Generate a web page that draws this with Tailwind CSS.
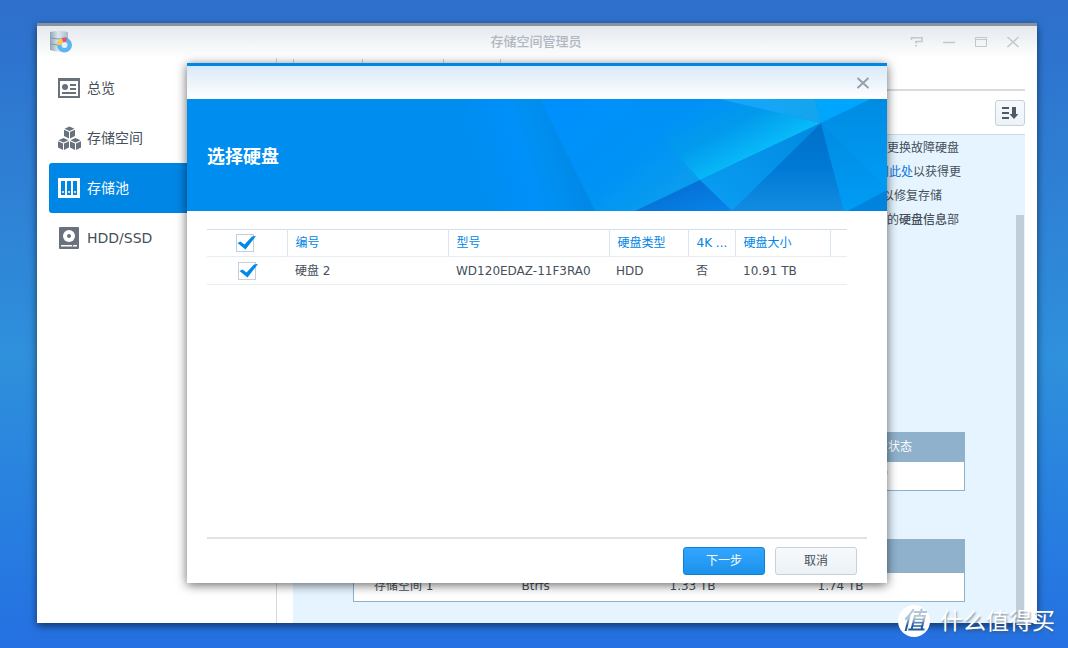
<!DOCTYPE html>
<html lang="zh-CN">
<head>
<meta charset="utf-8">
<title>存储空间管理员</title>
<script src="https://cdn.jsdelivr.net/npm/@tailwindcss/browser@4"></script>
</head>
<body class="font-['DejaVu_Sans','Noto_Sans_CJK_SC',sans-serif] text-xs text-[#464f5a]">
<div class="relative flex min-h-screen overflow-hidden bg-linear-to-b from-[#2e6fcc] via-[#2f90dc] via-55% to-[#2570e2] pt-[23px] pr-[31px] pb-[25px] pl-[37px]">

  <!-- Storage manager window -->
  <main class="relative flex w-full flex-col border-t-3 border-[#8a929e] bg-white shadow-[0_3px_8px_rgba(0,0,0,0.55)]">
    <header class="flex h-8 items-center bg-linear-to-b from-[#e4e9ee] to-white pr-4 pl-3">
      <svg class="size-6" viewBox="0 0 24 24" aria-hidden="true">
        <defs><linearGradient id="cyl" x1="0" x2="1"><stop offset="0" stop-color="#8fa5b4"/><stop offset=".45" stop-color="#dbe7ef"/><stop offset="1" stop-color="#a7bdcc"/></linearGradient></defs>
        <path d="M1 2Q10 0 19 2V20Q10 23 1 20Z" fill="url(#cyl)"/>
        <path d="M1 8Q10 10 19 8M1 14Q10 16 19 14" stroke="#8699a6" fill="none"/>
        <circle cx="15.500" cy="15" r="5.250" fill="#e6edf3" stroke="#5ab6f0" stroke-width="4.500"/>
        <path d="M10.250 15A5.250 5.250 0 0 1 13.500 10.150" fill="none" stroke="#f9c852" stroke-width="4.500"/>
        <path d="M13.500 10.150A5.250 5.250 0 0 1 17.500 10.150" fill="none" stroke="#e8536d" stroke-width="4.500"/>
      </svg>
      <h1 class="flex-1 pl-[90px] text-center text-[13px] font-medium text-[#b0b7c1]">存储空间管理员</h1>
      <div class="flex gap-4 text-[#c3c7cc]">
        <button type="button" aria-label="帮助" class="size-4"><svg viewBox="0 0 16 16" fill="none" stroke="currentColor" stroke-width="1.500"><path d="M2.500 6V3.750H13V7.500H7V9.500M6.250 11.750H8"/></svg></button>
        <button type="button" aria-label="最小化" class="size-4"><svg viewBox="0 0 16 16" stroke="currentColor" stroke-width="1.500"><path d="M2 8.500H14"/></svg></button>
        <button type="button" aria-label="最大化" class="size-4"><svg viewBox="0 0 16 16" fill="none" stroke="currentColor"><path d="M2.500 3.500H13.500V12.500H2.500ZM2.500 5.500H13.500"/></svg></button>
        <button type="button" aria-label="关闭" class="size-4"><svg viewBox="0 0 16 16" stroke="currentColor" stroke-width="1.500"><path d="M2.500 3L13.500 13M13.500 3L2.500 13"/></svg></button>
      </div>
    </header>

    <div class="flex flex-1">
      <nav class="w-60 shrink-0 border-r border-[#d5d9dc] pt-[5px] pl-3 text-sm">
        <a href="#overview" class="flex h-[50px] items-center gap-1.5 rounded-l-[3px] pl-2">
          <svg class="size-6 text-[#68717c]" viewBox="0 0 24 24" aria-hidden="true"><path fill="currentColor" fill-rule="evenodd" d="M1 2h22v20h-22ZM3 5v15h18V5Z"/><circle cx="8" cy="11" r="3" fill="currentColor"/><path stroke="currentColor" stroke-width="2" d="M13 9h6M13 13h6M5 17h14"/></svg>
          总览</a>
        <a href="#volume" class="flex h-[50px] items-center gap-1.5 rounded-l-[3px] pl-2">
          <svg class="size-6 text-[#68717c]" viewBox="0 0 24 24" aria-hidden="true"><g id="cube" fill="currentColor"><path d="M12.500.5l5 2.200-5 2.300-5-2.300Z"/><path d="M7 3.800l5 2.300v6.400l-5-2.600ZM18 3.800l-5 2.300v6.400l5-2.600Z"/></g><use href="#cube" x="-6" y="11.500"/><use href="#cube" x="6" y="11.500"/></svg>
          存储空间</a>
        <a href="#pool" aria-current="page" class="flex h-[50px] items-center gap-1.5 rounded-l-[3px] bg-[#0086e5] pl-2 text-white">
          <svg class="size-6" viewBox="0 0 24 24" aria-hidden="true"><path fill="#fff" d="M1 2h22v20h-22Z"/><path fill="#0086e5" d="M4 5h4v14H4ZM10 5h4v14h-4ZM16 5h4v14h-4Z"/><path fill="#fff" d="M5.250 15h1.500v2h-1.500ZM11.250 15h1.500v2h-1.500ZM17.250 15h1.500v2h-1.500Z"/></svg>
          存储池</a>
        <a href="#hdd" class="flex h-[50px] items-center gap-1.5 rounded-l-[3px] pl-2">
          <svg class="size-6 text-[#68717c]" viewBox="0 0 24 24" aria-hidden="true"><rect x="2" y="1" width="20" height="22" rx="1" fill="currentColor"/><circle cx="12" cy="10" r="6" fill="#fff"/><circle cx="12" cy="10" r="2" fill="currentColor"/><path stroke="#fff" stroke-width="1.500" d="M4 19.750h16"/><path stroke="currentColor" stroke-width="1.500" d="M15 19.750h1"/></svg>
          HDD/SSD</a>
      </nav>

      <section class="flex flex-1 flex-col pt-px pr-3 pl-4">
        <div class="flex h-8 border-b-2 border-[#d9dbdd]">
          <div class="w-[70px] border-x border-[#cdd3d8]"></div>
          <div class="w-[81px] border-r border-[#cdd3d8]"></div>
          <div class="w-[57px] border-r border-[#cdd3d8]"></div>
        </div>
        <div class="flex h-[43px] items-center justify-end">
          <button type="button" aria-label="排序" class="flex h-[26px] w-[30px] items-center justify-center rounded-[3px] border border-[#c3d0dd] bg-linear-to-b from-[#f6fafd] to-[#edf2f7]">
            <svg class="size-4" viewBox="0 0 16 16" fill="#505a64" aria-hidden="true"><path d="M0 2h7v2H0ZM0 7h7v2H0ZM0 12h7v2H0ZM10 2h4v7h2.500L12 14 7.500 9H10Z"/></svg>
          </button>
        </div>
        <div class="relative flex-1 border-t border-[#c8dcea] bg-[#e5f4ff] px-[60px] pt-px pb-5">
          <div class="pl-[524px] leading-6 whitespace-nowrap">
            <p class="pl-[10px]">更换故障硬盘</p>
            <p><a href="#more" class="text-[#0b76e0]">阅此处</a>以获得更</p>
            <p class="pl-[5px]">以修复存储</p>
            <p class="pl-[10px]">的<span class="font-medium">硬盘信息</span>部</p>
          </div>
          <table class="mt-[200px] w-full border-collapse border border-[#8fb1cc] bg-white text-left">
            <thead><tr class="h-[29px] bg-[#8fb1cc] text-white"><th class="pl-[510px] font-normal">硬盘状态</th></tr></thead>
            <tbody><tr class="h-[29px]"><td class="pl-[510px] text-[#2aa896]">正常</td></tr></tbody>
          </table>
          <table class="mt-12 w-full table-fixed border-collapse border border-[#8fb1cc] bg-white text-left">
            <thead><tr class="h-[33px] bg-[#8fb1cc]"><th class="w-[158px]"></th><th class="w-[148px]"></th><th class="w-[148px]"></th><th></th></tr></thead>
            <tbody><tr class="h-[29px]"><td class="pb-0.5 pl-5">存储空间 1</td><td class="pb-0.5 pl-[10px]">Btrfs</td><td class="pb-0.5 pl-[10px]">1.33 TB</td><td class="pb-0.5 pl-[10px]">1.74 TB</td></tr></tbody>
          </table>
          <div class="absolute top-20 right-px bottom-0 w-2 bg-[#c0ced8]"></div>
        </div>
      </section>
    </div>

    <!-- Disk selection dialog -->
    <div role="dialog" aria-labelledby="dlg-title" class="absolute top-[37px] right-[150px] bottom-10 left-[150px] flex flex-col border-t-3 border-[#0086e5] bg-white shadow-[0_2px_10px_rgba(0,0,0,0.6)]">
      <div class="flex h-[33px] items-center justify-end bg-linear-to-b from-[#d8eaf8] to-white pr-4">
        <button type="button" aria-label="关闭" class="size-4 text-[#98a1aa]"><svg viewBox="0 0 16 16" stroke="currentColor" stroke-width="2"><path d="M2.500 3L13.500 13M13.500 3L2.500 13"/></svg></button>
      </div>
      <div class="relative flex h-28 items-center bg-[#008df0] pt-1 pl-5">
        <svg class="absolute top-0 right-0 h-28 w-[420px]" viewBox="0 0 420 112" aria-hidden="true">
          <defs>
            <linearGradient id="a" gradientUnits="userSpaceOnUse" x1="0" y1="30" x2="100" y2="0"><stop offset="0" stop-color="#008df0"/><stop offset=".4" stop-color="#0090fa"/><stop offset=".6" stop-color="#0090f2"/><stop offset="1" stop-color="#0086e4"/></linearGradient>
            <linearGradient id="b" gradientUnits="userSpaceOnUse" x1="100" y1="0" x2="190" y2="112"><stop offset="0" stop-color="#0090fd"/><stop offset=".6" stop-color="#0092f5"/><stop offset="1" stop-color="#0a9dee"/></linearGradient>
            <linearGradient id="c" gradientUnits="userSpaceOnUse" x1="240" y1="0" x2="272" y2="62"><stop offset="0" stop-color="#0091f7"/><stop offset=".5" stop-color="#029aec"/><stop offset="1" stop-color="#08b8f8"/></linearGradient>
            <linearGradient id="d"><stop offset="0" stop-color="#15a6ff"/><stop offset="1" stop-color="#14a5ec"/></linearGradient>
            <linearGradient id="e" x1="1" y1="0" x2="0" y2="1"><stop offset="0" stop-color="#0089e0"/><stop offset="1" stop-color="#0a9ff4"/></linearGradient>
            <linearGradient id="f" x1="0" y1="0" x2="0" y2="1"><stop offset="0" stop-color="#0070c8"/><stop offset=".5" stop-color="#0079d5"/><stop offset="1" stop-color="#128ce2"/></linearGradient>
            <linearGradient id="g" x1="0" y1="0" x2="1" y2="1"><stop offset="0" stop-color="#0468cd"/><stop offset="1" stop-color="#0784ea"/></linearGradient>
            <linearGradient id="h" x1="0" y1="0" x2="0" y2="1"><stop offset="0" stop-color="#008be2"/><stop offset="1" stop-color="#009cf5"/></linearGradient>
          </defs>
          <path fill="url(#a)" d="M0 0H74L129 112H0Z"/>
          <path fill="url(#b)" d="M73 0H160L233 81 170 112H128Z"/>
          <path fill="url(#c)" d="M160 0H252L354 24 233 81Z"/>
          <path fill="url(#d)" d="M252 0H348L354 24Z"/>
          <path fill="#00a5fd" d="M348 0H404L354 24Z"/>
          <path fill="url(#h)" d="M404 0H420V90L354 24Z"/>
          <path fill="url(#e)" d="M354 24L233 81 265 112Z"/>
          <path fill="url(#g)" d="M233 81L265 112H168Z"/>
          <path fill="url(#f)" d="M354 24L377 112H265Z"/>
          <path fill="url(#h)" d="M354 24L420 89V92L383 112H377Z"/>
          <path fill="#0083dc" d="M420 91V112H381Z"/>
        </svg>
        <h2 id="dlg-title" class="relative text-lg font-bold text-white">选择硬盘</h2>
      </div>
      <div class="flex flex-1 flex-col px-5 pt-[18px] pb-2">
        <div class="flex-1 pr-5">
          <table class="w-full table-fixed border-collapse text-left whitespace-nowrap">
            <thead>
              <tr class="h-[27px] border-y border-t-[#d3dfea] border-b-[#e8edf2] text-[#0086e5] *:border-r *:border-[#dce6f0] *:font-normal">
                <th class="w-20 pb-px pl-[29px]"><label class="relative block size-[18px]"><input type="checkbox" checked aria-label="全选" class="block size-[18px] appearance-none border border-[#c3cfdc] bg-white"><svg class="absolute top-0 left-0 h-[18px] w-5" viewBox="0 0 20 18" aria-hidden="true"><path fill="#0088ea" d="M1.500 9L4.500 7.500 8.500 10.500 16 2.500 20 2 9.500 15.500Z"/></svg></label></th>
                <th class="w-[161px] pl-2">编号</th>
                <th class="w-[161px] pl-2">型号</th>
                <th class="w-[79px] pl-2">硬盘类型</th>
                <th class="w-[47px] pl-2">4K ...</th>
                <th class="w-[95px] pl-2">硬盘大小</th>
                <th class="border-r-0!"></th>
              </tr>
            </thead>
            <tbody>
              <tr class="h-7 border-b border-[#e8edf2]">
                <td class="pl-[31px]"><label class="relative block size-[18px]"><input type="checkbox" checked aria-label="选择硬盘 2" class="block size-[18px] appearance-none border border-[#c3cfdc] bg-white"><svg class="absolute top-0 left-0 h-[18px] w-5" viewBox="0 0 20 18" aria-hidden="true"><path fill="#0088ea" d="M1.500 9L4.500 7.500 8.500 10.500 16 2.500 20 2 9.500 15.500Z"/></svg></label></td>
                <td class="pl-2">硬盘 2</td>
                <td class="pl-2">WD120EDAZ-11F3RA0</td>
                <td class="pl-[7px]">HDD</td>
                <td class="pl-2">否</td>
                <td class="pl-2">10.91 TB</td>
                <td></td>
              </tr>
            </tbody>
          </table>
        </div>
        <div class="flex justify-end gap-[10px] border-t-2 border-[#e0e2e4] pt-2 pr-[10px]">
          <button type="button" class="h-7 w-[82px] rounded-[3px] border border-[#0f80d8] bg-linear-to-b from-[#33a7ff] to-[#1a91ea] text-white">下一步</button>
          <button type="button" class="h-7 w-[82px] rounded-[3px] border border-[#c5d1dc] bg-linear-to-b from-[#f6fafd] to-[#ebf1f5]">取消</button>
        </div>
      </div>
    </div>
  </main>

  <!-- Watermark -->
  <div class="absolute right-[13px] bottom-[11px] flex items-center gap-[10px] text-[23px] leading-8 text-white">
    <span class="flex size-8 items-center justify-center rounded-full bg-white"><span class="bg-linear-to-b from-[#b4c5d3] from-40% to-[#1c599e] to-65% bg-clip-text pr-px text-2xl font-medium text-transparent italic">值</span></span>
    <span class="[text-shadow:1px_2px_2px_rgba(70,90,110,0.6)]">什么值得买</span>
  </div>
</div>
</body>
</html>
